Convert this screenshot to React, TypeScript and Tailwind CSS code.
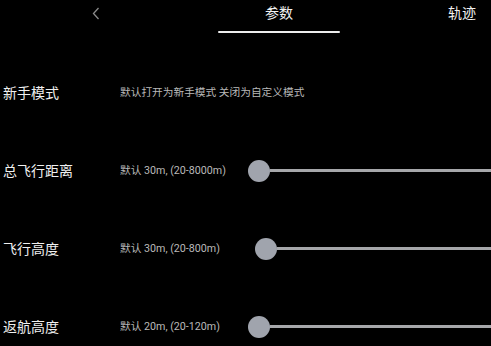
import React from "react";

interface SettingRow {
  label: string;
  hint: string;
  slider?: boolean;
  offset?: string; // thumb margin class
}

const rows: SettingRow[] = [
  { label: "新手模式", hint: "默认打开为新手模式 关闭为自定义模式" },
  { label: "总飞行距离", hint: "默认 30m, (20-8000m)", slider: true, offset: "ml-0" },
  { label: "飞行高度", hint: "默认 30m, (20-800m)", slider: true, offset: "ml-[7px]" },
  { label: "返航高度", hint: "默认 20m, (20-120m)", slider: true, offset: "ml-0" },
];

const Slider = ({ offset }: { offset?: string }) => (
  <div className="flex-1 flex items-center">
    <div className={`${offset} w-[22px] h-[22px] rounded-full bg-[#a0a4ad] shrink-0`} />
    <div className="flex-1 h-[3px] bg-[#a6a7aa] -mt-[1px]" />
  </div>
);

export default function App() {
  return (
    <div
      className="w-[491px] h-[346px] bg-black overflow-hidden text-white"
      style={{ fontFamily: "Roboto, 'Noto Sans CJK SC', sans-serif" }}
    >
      {/* header */}
      <div className="flex items-start h-[34px] pl-[92px]">
        <svg width="8" height="13" viewBox="0 0 8 13" className="mt-[7px]">
          <path d="M6.5 1 L1.5 6.5 L6.5 12" fill="none" stroke="#8a8a8a" strokeWidth="1.3" />
        </svg>
        <div className="ml-[118px] w-[122px] h-[34px] flex flex-col items-center">
          <span className="text-[14px] leading-none mt-[6px] text-[#f2f2f2]">参数</span>
          <div className="mt-auto mb-[1px] h-[2px] w-full bg-[#ececec] rounded-full" />
        </div>
        <span className="ml-[108px] text-[14px] leading-none mt-[6px] text-[#f2f2f2]">轨迹</span>
      </div>

      <div className="pt-[20px]">
        {rows.map((row, i) => (
          <div key={i} className="h-[78px] flex items-center">
            <div className="w-[120px] pl-[3px] text-[14px] text-[#f0f0f0] shrink-0">{row.label}</div>
            <div className="w-[128px] text-[10.7px] text-[#b9b9b9] whitespace-nowrap shrink-0 mt-[1px]">
              {row.hint}
            </div>
            {row.slider && <Slider offset={row.offset} />}
          </div>
        ))}
      </div>
    </div>
  );
}
